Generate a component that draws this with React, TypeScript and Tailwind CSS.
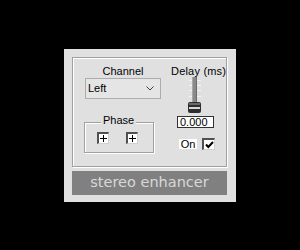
import React from "react";

function PlusBox() {
  return (
    <div className="w-[12px] h-[12px] bg-white border-t-2 border-l-2 border-r border-b border-t-[#505050] border-l-[#505050] border-r-[#d0d0d0] border-b-[#d0d0d0] flex items-center justify-center">
      <svg width="9" height="9" viewBox="0 0 9 9" className="block">
        <path d="M4.5 1V8M1 4.5H8" stroke="#000" strokeWidth="1" />
      </svg>
    </div>
  );
}

function Slider() {
  const ticks = [81, 86, 91, 97];
  return (
    <svg width="16" height="38" viewBox="0 0 16 38" className="block">
      {ticks.map((t) => (
        <line key={t} x1="2" x2="14" y1={t - 77 + 0.5} y2={t - 77 + 0.5} stroke="#f4f4f4" strokeWidth="1" />
      ))}
      <rect x="5" y="1" width="5" height="26" fill="#8a8a8a" />
      <rect x="5" y="1" width="1" height="26" fill="#a8a8a8" />
      <rect x="9" y="1" width="1" height="26" fill="#6a6a6a" />
      <rect x="1" y="26" width="13" height="11" rx="2" fill="#2e2e2e" />
      <rect x="2" y="27" width="11" height="2" fill="#6a6a6a" />
      <rect x="2" y="31" width="11" height="2" fill="#d8d8d8" />
    </svg>
  );
}

export default function App() {
  const font = { fontFamily: '"Liberation Sans", Arial, sans-serif' };
  return (
    <div className="w-[300px] h-[250px] bg-black pl-[64px] pt-[49px]" style={font}>
      <div className="w-[172px] h-[153px] bg-[#e0e0e0] pl-[8px] pt-[8px] flex flex-col">
        <div className="w-[155px] h-[110px] border border-[#a0a0a0] shadow-[inset_1px_1px_0_#ffffff,1px_1px_0_#ffffff] flex">
          <div className="ml-[12px] w-[76px] flex flex-col">
            <div className="text-[11px] leading-[13px] text-black text-center mt-[7px] h-[12px]">Channel</div>
            <div className="mt-[1px] h-[21px] border border-[#adadad] bg-[#e5e5e5] flex items-center justify-between pl-[2px] pr-[6px]">
              <span className="text-[11px] leading-[13px] text-black">Left</span>
              <svg width="8" height="5" viewBox="0 0 8 5" className="block">
                <path d="M0.5 0.5L4 4L7.5 0.5" fill="none" stroke="#404040" strokeWidth="1" />
              </svg>
            </div>
            <div className="relative ml-[-1px] mt-[23px] w-[70px] h-[31px] border border-[#a0a0a0] shadow-[inset_1px_1px_0_#ffffff,1px_1px_0_#ffffff] flex items-start pl-[12px] pt-[9px] gap-[17px]">
              <span className="absolute left-[16px] top-[-9px] px-[2px] bg-[#e0e0e0] text-[11px] leading-[13px] text-black">Phase</span>
              <PlusBox />
              <PlusBox />
            </div>
          </div>
          <div className="ml-[10px] w-[50px] flex flex-col items-start">
            <div className="text-[11px] leading-[13px] text-black mt-[7px] whitespace-nowrap tracking-[0.2px]">Delay (ms)</div>
            <div className="ml-[16px] mt-[-2px]">
              <Slider />
            </div>
            <div className="ml-[6px] mt-[2px] w-[37px] h-[12px] bg-white border border-[#303030] text-[11px] leading-[10px] text-black pl-[2px]">0.000</div>
            <div className="ml-[8px] mt-[10px] flex items-center gap-[5px]">
              <div className="w-[18px] h-[10px] bg-white text-[11px] leading-[10px] text-black text-center">On</div>
              <div className="w-[13px] h-[12px] bg-white border-t-2 border-l-2 border-r border-b border-t-[#505050] border-l-[#505050] border-r-[#d0d0d0] border-b-[#d0d0d0] flex items-center justify-center">
                <svg width="9" height="8" viewBox="0 0 9 8" className="block">
                  <path d="M1 3.5L3.3 6L8 1" fill="none" stroke="#000" strokeWidth="2" />
                </svg>
              </div>
            </div>
          </div>
        </div>
        <div className="mt-[4px] w-[155px] h-[24px] bg-[#808080] flex items-center justify-center text-[14.5px] text-[#d8d8d8]" style={{ fontFamily: '"DejaVu Sans", Verdana, sans-serif' }}>
          stereo enhancer
        </div>
      </div>
    </div>
  );
}
